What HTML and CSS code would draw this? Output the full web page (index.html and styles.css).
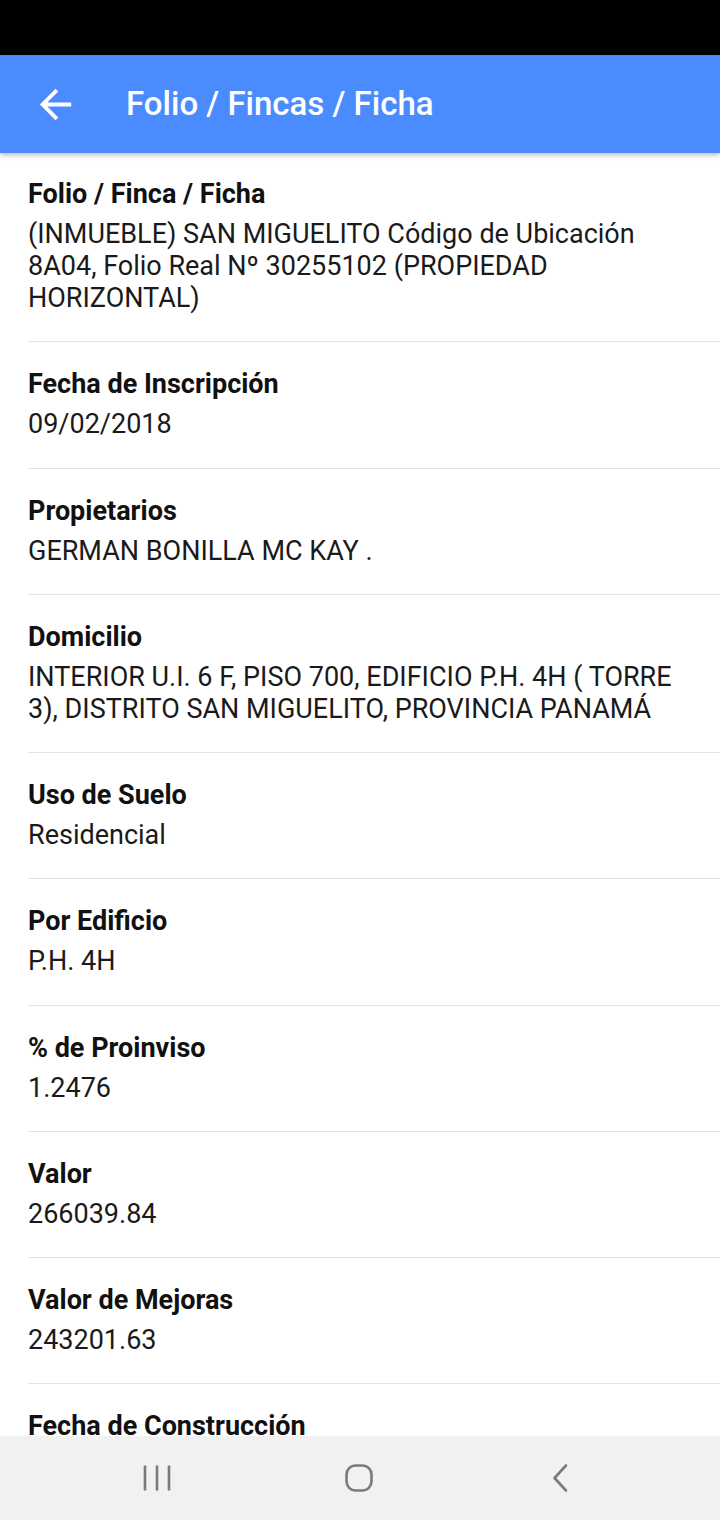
FILE: index.html
```html
<!DOCTYPE html>
<html lang="es">
<head>
<meta charset="utf-8">
<title>Folio / Fincas / Ficha</title>
<link rel="stylesheet" href="styles.css">
</head>
<body>
<div class="status-bar"></div>
<header class="app-bar">
  <svg class="back-icon" viewBox="0 0 24 24" width="47" height="47" aria-hidden="true">
    <path d="M20 11H7.830l5.59-5.59L12 4l-8 8 8 8 1.41-1.41L7.83 13H20v-2z" fill="#ffffff"/>
  </svg>
  <h1 class="app-title">Folio / Fincas / Ficha</h1>
</header>
<main class="list">
  <section class="item first">
    <div class="label">Folio / Finca / Ficha</div>
    <div class="value">(INMUEBLE) SAN MIGUELITO Código de Ubicación 8A04, Folio Real Nº 30255102 (PROPIEDAD HORIZONTAL)</div>
  </section>
  <section class="item">
    <div class="label">Fecha de Inscripción</div>
    <div class="value">09/02/2018</div>
  </section>
  <section class="item">
    <div class="label">Propietarios</div>
    <div class="value">GERMAN BONILLA MC KAY .</div>
  </section>
  <section class="item">
    <div class="label">Domicilio</div>
    <div class="value">INTERIOR U.I. 6 F, PISO 700, EDIFICIO P.H. 4H ( TORRE 3), DISTRITO SAN MIGUELITO, PROVINCIA PANAMÁ</div>
  </section>
  <section class="item">
    <div class="label">Uso de Suelo</div>
    <div class="value">Residencial</div>
  </section>
  <section class="item">
    <div class="label">Por Edificio</div>
    <div class="value">P.H. 4H</div>
  </section>
  <section class="item">
    <div class="label">% de Proinviso</div>
    <div class="value">1.2476</div>
  </section>
  <section class="item">
    <div class="label">Valor</div>
    <div class="value">266039.84</div>
  </section>
  <section class="item">
    <div class="label">Valor de Mejoras</div>
    <div class="value">243201.63</div>
  </section>
  <section class="item">
    <div class="label">Fecha de Construcción</div>
    <div class="value">&nbsp;</div>
  </section>
</main>
<nav class="nav-bar">
  <svg class="nav-icon" viewBox="0 0 30 30" width="30" height="30" aria-hidden="true">
    <path d="M3 2.5v25M15 2.5v25M27 2.5v25" stroke="#7a7a7a" stroke-width="2.6" fill="none"/>
  </svg>
  <svg class="nav-icon" viewBox="0 0 30 30" width="30" height="30" aria-hidden="true">
    <rect x="2.5" y="2.5" width="25" height="25" rx="9" stroke="#7a7a7a" stroke-width="2.6" fill="none"/>
  </svg>
  <svg class="nav-icon" viewBox="0 0 30 30" width="30" height="30" aria-hidden="true">
    <path d="M21 2.5L9.5 15L21 27.5" stroke="#7a7a7a" stroke-width="2.6" fill="none" stroke-linecap="round" stroke-linejoin="round"/>
  </svg>
</nav>
</body>
</html>
```

FILE: styles.css
```css
html, body {
  margin: 0;
  padding: 0;
}

body {
  width: 720px;
  height: 1520px;
  overflow: hidden;
  background: #ffffff;
  font-family: Roboto, "Noto Sans", "Liberation Sans", sans-serif;
  position: relative;
}

.status-bar {
  height: 55px;
  background: #000000;
}

.app-bar {
  height: 98px;
  background: #4a8cfe;
  display: flex;
  align-items: center;
  padding-left: 32px;
  box-shadow: 0 2px 5px rgba(0, 0, 0, 0.28);
  position: relative;
  z-index: 2;
}

.back-icon {
  display: block;
  flex: none;
}

.app-title {
  margin: 0 0 0 47px;
  color: #ffffff;
  font-size: 33px;
  font-weight: 500;
  line-height: 38px;
  letter-spacing: 0;
}

.list {
  padding-left: 28px;
}

.item {
  padding: 26px 0 27.25px;
  border-bottom: 1px solid #e2e2e2;
}

.item.first {
  padding-top: 25px;
}

.label {
  font-size: 27px;
  font-weight: 700;
  line-height: 32px;
  color: #111111;
  margin-bottom: 8px;
}

.value {
  font-size: 27px;
  font-weight: 400;
  line-height: 32px;
  color: #1a1a1a;
  padding-right: 40px;
}

.nav-bar {
  position: fixed;
  left: 0;
  bottom: 0;
  width: 720px;
  height: 84px;
  background: #f1f1f1;
  display: flex;
  align-items: center;
  justify-content: space-between;
  padding: 0 145px 0 142px;
  box-sizing: border-box;
  z-index: 3;
}

.nav-icon {
  display: block;
}
```
